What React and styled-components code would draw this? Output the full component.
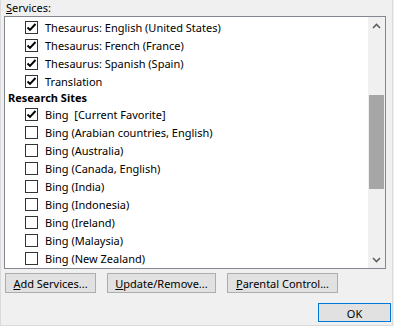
import React from "react";
import styled, { createGlobalStyle } from "styled-components";

const Global = createGlobalStyle`
  html, body { margin: 0; padding: 0; background: #f0f0f0; }
  body { font-family: "Noto Sans", "Segoe UI", "Liberation Sans", sans-serif; font-size: 11px; color: #000; }
  * { box-sizing: border-box; }
`;

const Dialog = styled.div`
  width: 393px;
  height: 326px;
  border: 1px solid #dadada;
  border-top: none;
  background: #f0f0f0;
  display: flex;
  flex-direction: column;
  padding: 0 0 0 3px;
`;

const Label = styled.div`
  height: 16px;
  line-height: 15px;
  padding-left: 2px;
`;

const Acc = styled.span`
  text-decoration: underline;
  text-underline-offset: 1px;
`;

const ListBox = styled.div`
  width: 382px;
  height: 253px;
  border: 1px solid #828790;
  background: #fff;
  display: flex;
  overflow: hidden;
`;

const Items = styled.div`
  flex: 1;
  padding-top: 1px;
  display: flex;
  flex-direction: column;
`;

const Row = styled.div`
  height: 18px;
  display: flex;
  align-items: center;
  padding-left: 20px;
  white-space: pre;
`;

const Header = styled.div`
  height: 15px;
  line-height: 15px;
  padding-left: 3px;
  font-weight: bold;
`;

const Box = styled.span`
  width: 13px;
  height: 13px;
  border: 1px solid #333;
  background: #fff;
  margin-right: 7px;
  flex: none;
  display: flex;
  align-items: center;
  justify-content: center;
`;

const ScrollBar = styled.div`
  width: 17px;
  background: #f0f0f0;
  display: flex;
  flex-direction: column;
  align-items: center;
`;

const Arrow = styled.div`
  height: 17px;
  width: 17px;
  display: flex;
  align-items: center;
  justify-content: center;
`;

const Track = styled.div`
  flex: 1;
  width: 17px;
  padding-top: 61px;
  display: flex;
  justify-content: center;
`;

const Thumb = styled.div`
  width: 15px;
  height: 94px;
  background: #a6a6a6;
`;

const ButtonRow = styled.div`
  display: flex;
  gap: 11px;
  margin-top: 4px;
  padding-left: 1px;
`;

const Button = styled.div`
  width: ${(p) => p.$w}px;
  height: 20px;
  border: 1px solid ${(p) => (p.$default ? "#0078d7" : "#adadad")};
  background: #e1e1e1;
  display: flex;
  align-items: center;
  justify-content: center;
  white-space: nowrap;
`;

const Footer = styled.div`
  display: flex;
  justify-content: flex-end;
  margin-top: 10px;
  padding-right: 1px;
`;

const OkButton = styled(Button)`
  height: 19px;
  padding-top: 1px;
`;

const Check = () => (
  <svg width="11" height="11" viewBox="0 0 11 11">
    <polyline points="1.5,5.5 4,8 9.5,2" fill="none" stroke="#000" strokeWidth="1.9" />
  </svg>
);

const Chevron = ({ up }) => (
  <svg width="9" height="6" viewBox="0 0 9 6">
    <polyline
      points={up ? "1,5 4.5,1.5 8,5" : "1,1 4.5,4.5 8,1"}
      fill="none"
      stroke="#606060"
      strokeWidth="1.6"
    />
  </svg>
);

const Item = ({ checked, children }) => (
  <Row>
    <Box>{checked && <Check />}</Box>
    {children}
  </Row>
);

const services = [
  "Thesaurus: English (United States)",
  "Thesaurus: French (France)",
  "Thesaurus: Spanish (Spain)",
  "Translation",
];

const sites = [
  ["Bing  [Current Favorite]", true],
  ["Bing (Arabian countries, English)", false],
  ["Bing (Australia)", false],
  ["Bing (Canada, English)", false],
  ["Bing (India)", false],
  ["Bing (Indonesia)", false],
  ["Bing (Ireland)", false],
  ["Bing (Malaysia)", false],
  ["Bing (New Zealand)", false],
];

export default function App() {
  return (
    <>
      <Global />
      <Dialog>
        <Label>
          <Acc>S</Acc>ervices:
        </Label>
        <ListBox>
          <Items>
            {services.map((s) => (
              <Item key={s} checked>
                {s}
              </Item>
            ))}
            <Header>Research Sites</Header>
            {sites.map(([s, c]) => (
              <Item key={s} checked={c}>
                {s}
              </Item>
            ))}
          </Items>
          <ScrollBar>
            <Arrow>
              <Chevron up />
            </Arrow>
            <Track>
              <Thumb />
            </Track>
            <Arrow>
              <Chevron />
            </Arrow>
          </ScrollBar>
        </ListBox>
        <ButtonRow>
          <Button $w={91}>
            <Acc>A</Acc>dd Services...
          </Button>
          <Button $w={109}>
            <Acc>U</Acc>pdate/Remove...
          </Button>
          <Button $w={111}>
            <Acc>P</Acc>arental Control...
          </Button>
        </ButtonRow>
        <Footer>
          <OkButton $w={73} $default>
            OK
          </OkButton>
        </Footer>
      </Dialog>
    </>
  );
}
